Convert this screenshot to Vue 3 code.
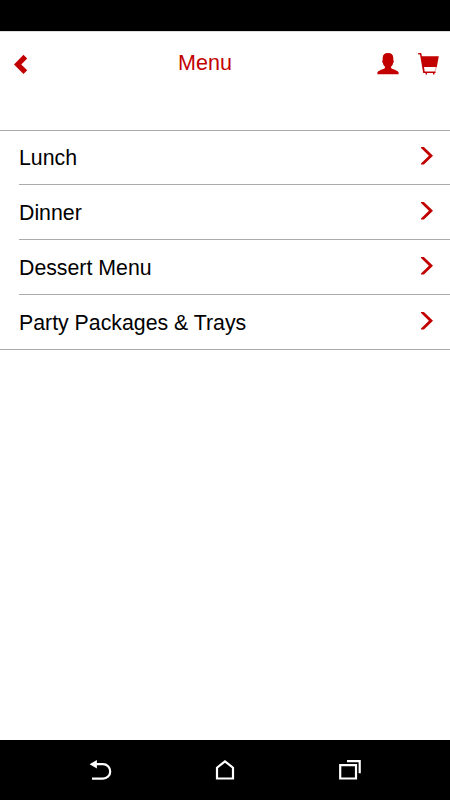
<script setup>
import {ref} from 'vue'

const title = ref('Menu')
const categories = ref([
    {id: 1, name: 'Lunch'},
    {id: 2, name: 'Dinner'},
    {id: 3, name: 'Dessert Menu'},
    {id: 4, name: 'Party Packages & Trays'},
])
</script>

<template>
    <div class="screen">
        <div class="status-bar"></div>

        <header class="header">
            <button class="icon-button" aria-label="Back">
                <svg class="back" width="15" height="20" viewBox="0 0 15 20">
                    <path d="M10.5 0.8 14.2 4.5 8.3 10.4 14.2 16.3 10.5 20 1 10.4Z"/>
                </svg>
            </button>
            <h1>{{ title }}</h1>
            <div class="header-actions">
                <button class="icon-button" aria-label="Account">
                    <svg width="22" height="22" viewBox="0 0 22 22">
                        <path d="M11 0C7.6 0 5.7 1.8 5.7 4.8V7C5 7.2 5.1 9.6 5.9 10C6.2 11.8 7 12.9 7.9 13.6V15C7.2 16.2 0.9 17.2 0.4 19.6V21.3H21.6V19.6C21.1 17.2 14.8 16.2 14.1 15V13.6C15 12.9 15.8 11.8 16.1 10C16.9 9.6 17 7.2 16.3 7V4.8C16.3 1.8 14.4 0 11 0Z"/>
                    </svg>
                </button>
                <button class="icon-button" aria-label="Cart">
                    <svg width="22" height="22" viewBox="0 0 22 22">
                        <path d="M0.2 0.1H3.2L3.9 3.3H20.8L18.8 14H6L6.7 18.4H17.6V19.9H16.5V21.5H15V19.9H9V21.5H7.5V19.9H5.2L2 1.6H0.2Z"/>
                        <path class="faint" d="M17.6 14H18.8L17.6 18.4H16.6Z"/>
                    </svg>
                </button>
            </div>
        </header>

        <ul class="menu-list">
            <li v-for="category in categories" :key="category.id">
                <span>{{ category.name }}</span>
                <svg width="13" height="20" viewBox="0 0 13 20">
                    <path d="M1 1H3.9L13 9.8 3.9 18.6H1V17.6L8.9 9.8 1 2Z"/>
                </svg>
            </li>
        </ul>

        <nav class="nav-bar">
            <svg width="24" height="24" viewBox="0 0 24 24">
                <path class="line" d="M6 6.2H15A7.2 7.2 0 0 1 15 20.6H4"/>
                <path class="solid" d="M1.6 6.2 8.9 1.9V10.5Z"/>
            </svg>
            <svg width="24" height="24" viewBox="0 0 24 24">
                <path class="line" d="M4 20.5V9.7L12 3.3 20 9.7V20.5Z"/>
            </svg>
            <svg width="24" height="24" viewBox="0 0 24 24">
                <path class="line" d="M2.2 7.2H18V20.5H2.2ZM9 3.2H21.7V15.2"/>
            </svg>
        </nav>
    </div>
</template>

<style>
body {
    margin: 0;
    background: #fff;
}
</style>

<style scoped>
.screen {
    display: flex;
    flex-direction: column;
    height: 100vh;
    background: #fff;
    font-family: "Liberation Sans", Arial, sans-serif;
    overflow: hidden;
}

.status-bar {
    height: 31px;
    flex-shrink: 0;
    background: #000;
    border-bottom: 1px solid #e0dcdc;
}

.header {
    display: grid;
    grid-template-columns: 1fr auto 1fr;
    align-items: center;
    height: 63px;
    margin-bottom: 35px;
    padding: 0 11px 0 13px;
    box-sizing: border-box;
    color: #c20000;
}

h1 {
    margin: 0;
    padding: 0 42px 2px 0;
    font-size: 21.5px;
    font-weight: normal;
    line-height: 26px;
}

.icon-button {
    display: flex;
    padding: 0;
    border: 0;
    background: none;
    color: inherit;
    cursor: pointer;
}

.icon-button svg {
    fill: currentColor;
}

.icon-button .faint {
    opacity: 0.35;
}

.header-actions {
    display: flex;
    justify-content: flex-end;
    gap: 19px;
    margin-right: -1px;
}

.menu-list {
    margin: 0;
    padding: 0 0 0 19px;
    list-style: none;
    border-top: 1px solid #aaa;
    border-bottom: 1px solid #aaa;
}

.menu-list li {
    display: flex;
    align-items: center;
    justify-content: space-between;
    height: 54px;
    padding-right: 17px;
    font-size: 21.3px;
    line-height: 26px;
    color: #000;
}

.menu-list li:not(:last-child) {
    border-bottom: 1px solid #aaa;
}

.menu-list li:first-child {
    height: 53px;
}

.menu-list span {
    padding-top: 1px;
}

.menu-list svg {
    margin-bottom: 3px;
    fill: #c20000;
}

.nav-bar {
    display: flex;
    align-items: center;
    justify-content: center;
    gap: 101px;
    height: 60px;
    margin-top: auto;
    background: #000;
}

.nav-bar .line {
    fill: none;
    stroke: #fff;
    stroke-width: 2.2;
}

.nav-bar .solid {
    fill: #fff;
}
</style>
